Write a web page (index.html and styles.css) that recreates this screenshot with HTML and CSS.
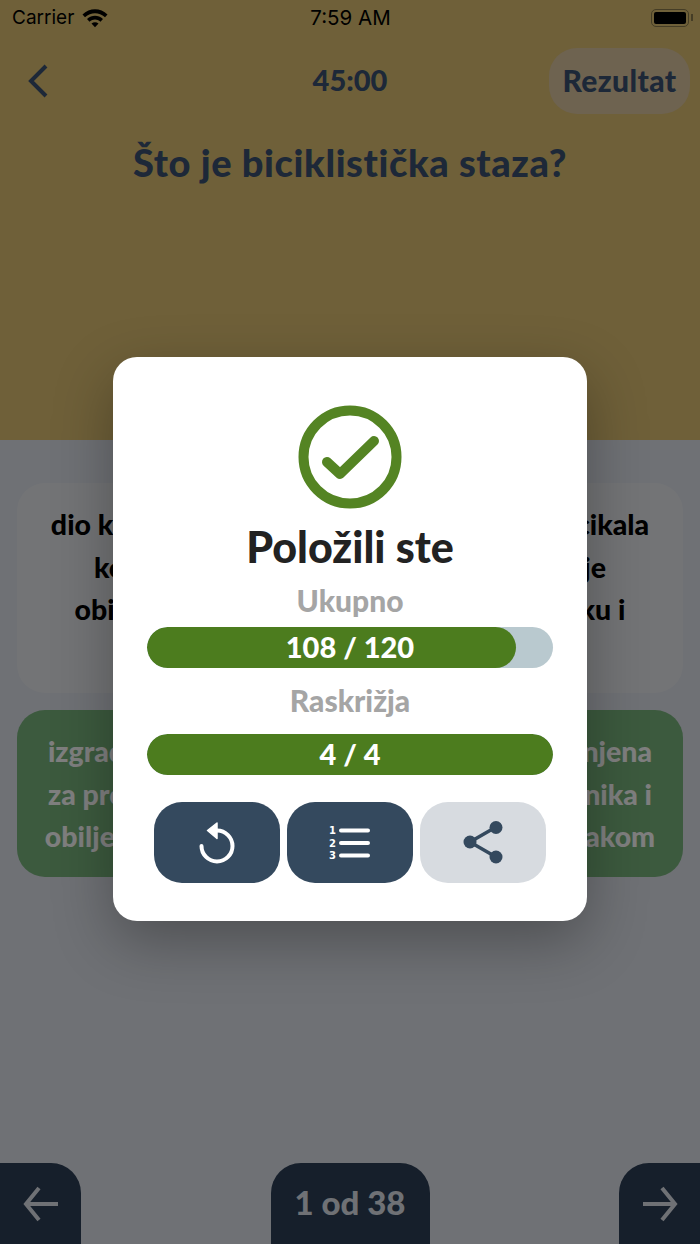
FILE: index.html
```html
<!DOCTYPE html>
<html lang="en">
<head>
    <meta charset="UTF-8">
    <meta name="viewport" content="width=device-width, initial-scale=1.0">
    <title>Rezultat ispita</title>
    <link rel="stylesheet" href="styles.css">
</head>
<body>
    <div class="screen">
        <div class="top">
            <div class="statusbar">
                <div class="carrier">
                    <span>Carrier</span>
                    <svg class="wifi" width="26" height="20" viewBox="0 0 26 20">
                        <path d="M0.500 6.500C7.500 -0.500 18.500 -0.500 25.500 6.500L23 9.200C17 3.800 9 3.800 3 9.200Z" fill="#000"/>
                        <path d="M5 11C10 6.800 16 6.800 21 11L18.500 13.700C15 10.800 11 10.800 7.500 13.700Z" fill="#000"/>
                        <path d="M9.500 15.500C11.700 13.800 14.300 13.800 16.500 15.500L13 19.200Z" fill="#000"/>
                    </svg>
                </div>
                <div class="clock">7:59 AM</div>
                <div class="battery"><div class="battery-fill"></div></div>
            </div>
            <div class="header">
                <svg class="back" width="24" height="36" viewBox="0 0 24 36">
                    <path d="M20 3L5 18L20 33" fill="none" stroke="#3a5070" stroke-width="4"/>
                </svg>
                <div class="timer">45:00</div>
                <div class="result-btn">Rezultat</div>
            </div>
            <h1 class="question">Što je biciklistička staza?</h1>
        </div>

        <div class="answers">
            <div class="answer">dio kolnika namijenjen za promet samo bicikala<br>koji je odvojen od ostalih kolnika i koji je<br>obilježen propisanim oznakama na kolniku i<br>prometnim znakom</div>
            <div class="answer answer-correct">izgrađena posebna površina koja je namijenjena<br>za promet svih biciklista, odvojena od pločnika i<br>obilježena odgovarajućom prometnom oznakom</div>
        </div>

        <div class="footer">
            <div class="nav nav-left">
                <svg width="36" height="36" viewBox="0 0 36 36">
                    <path d="M35 18H3M16 2L3 18L16 34" fill="none" stroke="#dee2ea" stroke-width="4"/>
                </svg>
            </div>
            <div class="nav nav-count">1 od 38</div>
            <div class="nav nav-right">
                <svg width="36" height="36" viewBox="0 0 36 36">
                    <path d="M1 18H33M20 2L33 18L20 34" fill="none" stroke="#dee2ea" stroke-width="4"/>
                </svg>
            </div>
        </div>

        <div class="overlay">
            <div class="modal">
                <svg class="check" width="104" height="104" viewBox="0 0 104 104">
                    <circle cx="52" cy="52" r="46.500" fill="none" stroke="#548423" stroke-width="10"/>
                    <path d="M29 57L42 69L76 36" fill="none" stroke="#548423" stroke-width="10" stroke-linecap="round" stroke-linejoin="round"/>
                </svg>
                <h2 class="modal-title">Položili ste</h2>
                <div class="label">Ukupno</div>
                <div class="bar">
                    <div class="bar-fill" style="width: 91%"></div>
                    <span class="bar-text">108 / 120</span>
                </div>
                <div class="label label-second">Raskrižja</div>
                <div class="bar bar-second">
                    <div class="bar-fill" style="width: 100%"></div>
                    <span class="bar-text">4 / 4</span>
                </div>
                <div class="actions">
                    <div class="action">
                        <svg width="44" height="44" viewBox="0 0 44 44">
                            <path d="M22 9.500A15.500 15.500 0 1 1 6.500 25" fill="none" stroke="#fff" stroke-width="4" stroke-linecap="round"/>
                            <path d="M22 2V17.500L12.500 9.500Z" fill="#fff" stroke="#fff" stroke-width="1.500" stroke-linejoin="round"/>
                        </svg>
                    </div>
                    <div class="action">
                        <svg width="44" height="36" viewBox="0 0 44 36">
                            <path d="M13 5.500H40M13 18H40M13 30.500H40" fill="none" stroke="#fff" stroke-width="4" stroke-linecap="round"/>
                            <text x="1" y="9" class="list-num">1</text>
                            <text x="1" y="21.500" class="list-num">2</text>
                            <text x="1" y="34" class="list-num">3</text>
                        </svg>
                    </div>
                    <div class="action action-light">
                        <svg width="40" height="44" viewBox="0 0 40 44">
                            <path d="M33 6L7 21L33 36" fill="none" stroke="#34495e" stroke-width="3.500"/>
                            <circle cx="33" cy="6.500" r="6.500" fill="#34495e"/>
                            <circle cx="7" cy="21" r="6.500" fill="#34495e"/>
                            <circle cx="33" cy="36" r="6.500" fill="#34495e"/>
                        </svg>
                    </div>
                </div>
            </div>
        </div>
    </div>
</body>
</html>
```

FILE: styles.css
```css
* {
    box-sizing: border-box;
}
body {
    margin: 0;
    font-family: Lato, "Noto Sans", sans-serif;
}
.screen {
    position: relative;
    width: 700px;
    height: 1244px;
    overflow: hidden;
    display: flex;
    flex-direction: column;
    background-color: #dee2ea;
}
.top {
    height: 440px;
    background-color: #dec072;
}
.statusbar {
    height: 35px;
    padding: 0 11px 0 12px;
    display: grid;
    grid-template-columns: 1fr auto 1fr;
    align-items: center;
    font-family: Inter, sans-serif;
    font-size: 19px;
    color: #000;
}
.clock {
    font-size: 20.500px;
}
.carrier {
    display: flex;
    align-items: center;
    gap: 8px;
}
.battery {
    justify-self: end;
    position: relative;
    width: 38px;
    height: 18px;
    padding: 2px;
    border: 1.500px solid #8a7a4c;
    border-radius: 5px;
}
.battery::after {
    content: "";
    position: absolute;
    top: 4px;
    right: -5px;
    width: 2px;
    height: 7px;
    background-color: #8a7a4c;
}
.battery-fill {
    height: 100%;
    background-color: #000;
    border-radius: 2px;
}
.header {
    height: 66px;
    margin-top: 13px;
    padding: 0 10px 0 26px;
    display: flex;
    align-items: center;
    justify-content: space-between;
    position: relative;
}
.timer {
    position: absolute;
    left: 0;
    right: 0;
    padding-bottom: 4px;
    text-align: center;
    font-size: 29px;
    font-weight: 900;
    color: #3a5070;
}
.result-btn {
    width: 141px;
    height: 66px;
    padding-bottom: 3px;
    border-radius: 28px;
    background-color: #dcc6a0;
    display: flex;
    align-items: center;
    justify-content: center;
    font-size: 30px;
    letter-spacing: 0.400px;
    font-weight: 900;
    color: #3a5070;
}
.question {
    margin: 25px 0 0;
    text-align: center;
    font-size: 38px;
    letter-spacing: 0.600px;
    font-weight: 900;
    color: #3a5070;
}
.answers {
    padding: 43px 17px 0;
    display: flex;
    flex-direction: column;
    gap: 17px;
}
.answer {
    height: 210px;
    padding-top: 20px;
    border-radius: 28px;
    background-color: #e7e9ed;
    text-align: center;
    font-size: 28.500px;
    line-height: 42.500px;
    font-weight: 900;
    color: #000;
    white-space: nowrap;
}
.answer-correct {
    height: 167px;
    background-color: #78b47c;
    color: #fff;
}
.footer {
    margin-top: auto;
    height: 81px;
    display: flex;
    justify-content: space-between;
}
.nav {
    background-color: #2c3e56;
    display: flex;
    align-items: flex-start;
    justify-content: center;
    padding-top: 23px;
}
.nav-left {
    width: 81px;
    border-top-right-radius: 30px;
}
.nav-right {
    width: 81px;
    border-top-left-radius: 30px;
}
.nav-count {
    width: 159px;
    padding-top: 19px;
    border-radius: 30px 30px 0 0;
    font-size: 33px;
    font-weight: 900;
    color: #dee2ea;
}
.overlay {
    position: absolute;
    top: 0;
    left: 0;
    right: 0;
    bottom: 0;
    padding-top: 357px;
    display: flex;
    justify-content: center;
    align-items: flex-start;
    background-color: rgba(0, 0, 0, 0.5);
}
.modal {
    width: 474px;
    height: 564px;
    padding: 48px 34px 0;
    border-radius: 24px;
    background-color: #fff;
    box-shadow: 0 20px 60px rgba(0, 0, 0, 0.3);
    display: flex;
    flex-direction: column;
    align-items: center;
}
.check {
    flex: none;
}
.modal-title {
    margin: 10px 0 0;
    height: 56px;
    line-height: 56px;
    font-size: 43px;
    font-weight: 900;
    color: #222;
}
.label {
    margin-top: 8px;
    height: 34px;
    line-height: 34px;
    font-size: 30px;
    font-weight: 900;
    color: #a5a5a5;
}
.label-second {
    margin-top: 15px;
}
.bar {
    position: relative;
    width: 406px;
    height: 41px;
    margin-top: 10px;
    border-radius: 20.500px;
    background-color: #b9c9cf;
    overflow: hidden;
    flex: none;
}
.bar-second {
    margin-top: 17px;
}
.bar-fill {
    height: 100%;
    border-radius: 20.500px;
    background-color: #4c7c1e;
}
.bar-text {
    position: absolute;
    top: 0;
    left: 0;
    right: 0;
    text-align: center;
    line-height: 39px;
    font-size: 29px;
    font-weight: 900;
    color: #fff;
}
.actions {
    margin-top: 27px;
    display: flex;
    gap: 7px;
}
.action {
    width: 126px;
    height: 81px;
    border-radius: 28px;
    background-color: #34495e;
    display: flex;
    align-items: center;
    justify-content: center;
}
.action-light {
    background-color: #d7dbe0;
}
.list-num {
    font-family: "DejaVu Sans", sans-serif;
    font-size: 10px;
    font-weight: 700;
    fill: #fff;
}
```
